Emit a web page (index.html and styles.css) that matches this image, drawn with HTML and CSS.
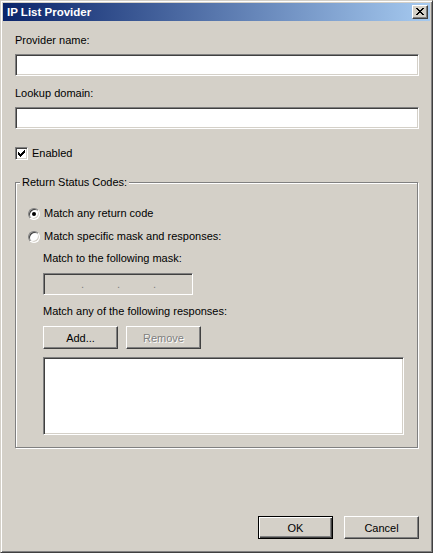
FILE: index.html
```html
<!DOCTYPE html>
<html lang="en">
<head>
<meta charset="utf-8">
<title>IP List Provider</title>
<link rel="stylesheet" href="styles.css">
</head>
<body>
<div class="window">
  <div class="titlebar">
    <span class="title">IP List Provider</span>
    <button class="close" aria-label="Close">
      <svg width="8" height="7" viewBox="0 0 8 7" shape-rendering="crispEdges"><path d="M0 0h2v1H0zM6 0h2v1H6zM1 1h2v1H1zM5 1h2v1H5zM2 2h4v1H2zM3 3h2v1H3zM2 4h4v1H2zM1 5h2v1H1zM5 5h2v1H5zM0 6h2v1H0zM6 6h2v1H6z" fill="#000"/></svg>
    </button>
  </div>
  <div class="content">
    <div class="label first">Provider name:</div>
    <div class="textbox"></div>
    <div class="label second">Lookup domain:</div>
    <div class="textbox"></div>
    <div class="check-row">
      <span class="checkbox">
        <svg width="9" height="9" viewBox="0 0 9 9" shape-rendering="crispEdges"><path d="M1 3h1v3H1zM2 4h1v3H2zM3 5h1v3H3zM4 4h1v3H4zM5 3h1v3H5zM6 2h1v3H6zM7 1h1v3H7z" fill="#000"/></svg>
      </span>
      <span class="row-text">Enabled</span>
    </div>
    <fieldset class="group">
      <legend>Return Status Codes:</legend>
      <div class="radio-row">
        <span class="radio checked"></span>
        <span class="row-text">Match any return code</span>
      </div>
      <div class="radio-row second-radio">
        <span class="radio"></span>
        <span class="row-text">Match specific mask and responses:</span>
      </div>
      <div class="indent">
        <div class="label mask-label">Match to the following mask:</div>
        <div class="maskbox"><span class="dot">.</span><span class="dot">.</span><span class="dot">.</span></div>
        <div class="label resp-label">Match any of the following responses:</div>
        <div class="button-row">
          <button class="btn">Add...</button>
          <button class="btn disabled">Remove</button>
        </div>
        <div class="listbox"></div>
      </div>
    </fieldset>
    <div class="footer">
      <button class="btn default">OK</button>
      <button class="btn">Cancel</button>
    </div>
  </div>
</div>
</body>
</html>
```
FILE: styles.css
```css
html, body {
  margin: 0;
  padding: 0;
  background: #d4d0c8;
}

body {
  font-family: "Liberation Sans", Arial, sans-serif;
  font-size: 11px;
  line-height: 13px;
  color: #000;
}

.window {
  width: 433px;
  height: 553px;
  box-sizing: border-box;
  background: #d4d0c8;
  border: 1px solid;
  border-color: #d4d0c8 #404040 #404040 #d4d0c8;
  box-shadow: inset 1px 1px #ffffff, inset -1px -1px #808080;
  padding: 2px;
  display: flex;
  flex-direction: column;
}

.titlebar {
  height: 18px;
  flex: none;
  display: flex;
  align-items: center;
  justify-content: space-between;
  background: linear-gradient(to right, #0a246a, #a6caf0);
  padding: 0 2px 0 4px;
}

.title {
  color: #fff;
  font-weight: bold;
  font-size: 11.5px;
}

.close {
  width: 16px;
  height: 14px;
  padding: 0;
  margin: 0;
  box-sizing: border-box;
  background: #d4d0c8;
  border: 1px solid;
  border-color: #ffffff #404040 #404040 #ffffff;
  box-shadow: inset -1px -1px #808080;
  display: flex;
  align-items: center;
  justify-content: center;
}

.close svg {
  display: block;
  margin: 0 0 1px 0;
}

.content {
  flex: 1;
  display: flex;
  flex-direction: column;
  padding: 0 11px 11px 12px;
}

.label {
  height: 13px;
  white-space: nowrap;
}

.label.first { margin-top: 13px; }
.label.second { margin-top: 11px; }

.textbox {
  height: 22px;
  margin-top: 7px;
  box-sizing: border-box;
  background: #fff;
  border: 1px solid;
  border-color: #808080 #ffffff #ffffff #808080;
  box-shadow: inset 1px 1px #404040, inset -1px -1px #d4d0c8;
}

.check-row {
  margin-top: 18px;
  display: flex;
  align-items: center;
  gap: 4px;
  height: 13px;
}

.checkbox {
  width: 13px;
  height: 13px;
  box-sizing: border-box;
  background: #fff;
  border: 1px solid;
  border-color: #808080 #ffffff #ffffff #808080;
  box-shadow: inset 1px 1px #404040, inset -1px -1px #d4d0c8;
  padding: 1px;
  flex: none;
}

.checkbox svg {
  display: block;
}

.row-text {
  white-space: nowrap;
}

.group {
  margin: 16px 1px 0 0;
  min-width: 0;
  padding: 18px 13px 12px 12px;
  border: 1px solid #808080;
  box-shadow: inset 1px 1px #ffffff, 1px 1px #ffffff;
}

.group legend {
  padding: 0 2px;
  margin-left: -8px;
  background: #d4d0c8;
  line-height: 13px;
}

.radio-row {
  display: flex;
  align-items: center;
  gap: 4px;
  height: 13px;
}

.second-radio {
  margin-top: 10px;
}

.radio {
  width: 12px;
  height: 12px;
  box-sizing: border-box;
  border-radius: 50%;
  background: #fff;
  border: 1px solid;
  border-color: #808080 #ffffff #ffffff #808080;
  box-shadow: inset 1px 1px #404040, inset -1px -1px #d4d0c8;
  display: flex;
  align-items: center;
  justify-content: center;
  flex: none;
}

.radio.checked::after {
  content: "";
  width: 4px;
  height: 4px;
  border-radius: 50%;
  background: #000;
}

.indent {
  padding-left: 15px;
  display: flex;
  flex-direction: column;
}

.mask-label { margin-top: 9px; }
.resp-label { margin-top: 10px; }

.maskbox {
  width: 150px;
  height: 22px;
  margin-top: 8px;
  box-sizing: border-box;
  background: #d4d0c8;
  border: 1px solid;
  border-color: #808080 #ffffff #ffffff #808080;
  box-shadow: inset 1px 1px #404040, inset -1px -1px #d4d0c8;
  display: flex;
  align-items: center;
  padding-left: 37px;
  color: #808080;
}

.dot {
  width: 36px;
  flex: none;
  line-height: 13px;
}

.button-row {
  margin-top: 8px;
  display: flex;
  gap: 8px;
}

.btn {
  width: 75px;
  height: 23px;
  padding: 0;
  margin: 0;
  box-sizing: border-box;
  background: #d4d0c8;
  font-family: "Liberation Sans", Arial, sans-serif;
  font-size: 11px;
  color: #000;
  border: 1px solid;
  border-color: #ffffff #404040 #404040 #ffffff;
  box-shadow: inset -1px -1px #808080;
}

.btn.disabled {
  color: #808080;
  text-shadow: 1px 1px #ffffff;
}

.btn.default {
  border: 1px solid #000;
  box-shadow: inset 1px 1px #ffffff, inset -1px -1px #404040, inset -2px -2px #808080;
}

.listbox {
  margin-top: 8px;
  height: 78px;
  box-sizing: border-box;
  background: #fff;
  border: 1px solid;
  border-color: #808080 #ffffff #ffffff #808080;
  box-shadow: inset 1px 1px #404040, inset -1px -1px #d4d0c8;
}

.footer {
  margin-top: auto;
  display: flex;
  justify-content: flex-end;
  gap: 11px;
}
```
